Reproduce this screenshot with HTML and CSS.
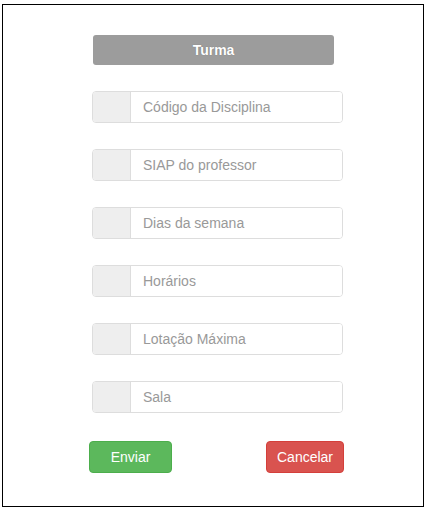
FILE: index.html
```html
<!DOCTYPE html>
<html lang="pt">
<head>
<meta charset="utf-8">
<title>Turma</title>
<link rel="stylesheet" href="styles.css">
</head>
<body>
<div class="frame">
  <form class="form">
    <div class="title">Turma</div>
    <div class="group"><span class="addon"></span><input class="field" type="text" placeholder="Código da Disciplina"></div>
    <div class="group"><span class="addon"></span><input class="field" type="text" placeholder="SIAP do professor"></div>
    <div class="group"><span class="addon"></span><input class="field" type="text" placeholder="Dias da semana"></div>
    <div class="group"><span class="addon"></span><input class="field" type="text" placeholder="Horários"></div>
    <div class="group"><span class="addon"></span><input class="field" type="text" placeholder="Lotação Máxima"></div>
    <div class="group"><span class="addon"></span><input class="field" type="text" placeholder="Sala"></div>
    <div class="actions">
      <button type="submit" class="btn btn-send">Enviar</button>
      <button type="button" class="btn btn-cancel">Cancelar</button>
    </div>
  </form>
</div>
</body>
</html>
```
FILE: styles.css
```css
* { box-sizing: border-box; }
html, body { margin: 0; padding: 0; background: #fff; }
body { font-family: "Liberation Sans", Arial, sans-serif; font-size: 14px; color: #333; }

.frame {
  margin: 4px 0 0 2px;
  width: 422px;
  height: 503px;
  border: 1px solid #000;
  padding-top: 30px;
}

.form {
  width: 251px;
  margin-left: 89px;
  display: flex;
  flex-direction: column;
}

.title {
  width: 241px;
  height: 30px;
  margin-left: 1px;
  background: #9c9c9c;
  border-radius: 3px;
  color: #fff;
  font-weight: bold;
  font-size: 14px;
  text-shadow: 0 0 1px rgba(0,0,0,0.3);
  display: flex;
  align-items: center;
  justify-content: center;
  margin-bottom: 26px;
}

.group {
  display: flex;
  height: 32px;
  border: 1px solid #ddd;
  border-radius: 4px;
  overflow: hidden;
  margin-bottom: 26px;
}

.addon {
  width: 38px;
  background: #eee;
  border-right: 1px solid #ddd;
  flex: none;
}

.field {
  flex: 1;
  min-width: 0;
  border: 0;
  outline: 0;
  padding: 0 12px;
  font-family: inherit;
  font-size: 14px;
  color: #555;
  background: #fff;
}
.field::placeholder { color: #999; opacity: 1; }

.actions {
  display: flex;
  justify-content: space-between;
  margin: 2px -1px 0 -3px;
}

.btn {
  height: 32px;
  border: 1px solid transparent;
  border-radius: 4px;
  color: #fff;
  font-family: inherit;
  font-size: 14px;
  padding: 0;
}
.btn-send { width: 83px; background: #5cb85c; border-color: #4cae4c; }
.btn-cancel { width: 78px; background: #d9534f; border-color: #d43f3a; }
```
